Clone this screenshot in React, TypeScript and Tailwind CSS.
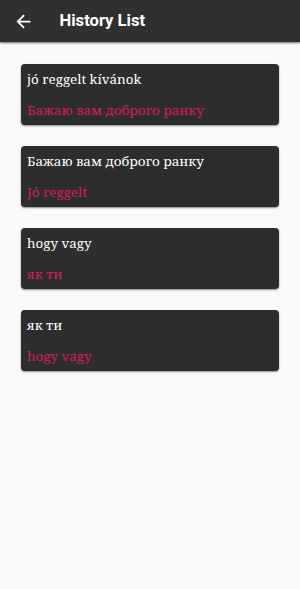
import React from 'react';

const items = [
    { source: 'jó reggelt kívánok', target: 'Бажаю вам доброго ранку' },
    { source: 'Бажаю вам доброго ранку', target: 'Jó reggelt' },
    { source: 'hogy vagy', target: 'як ти' },
    { source: 'як ти', target: 'hogy vagy' },
];

const HistoryCard: React.FC<{ source: string; target: string }> = ({ source, target }) => {
    return (
        <div className="h-[61px] rounded-[4px] bg-[#2d2d2d] px-[6px] pt-[4px] shadow-[0_1px_2px_rgba(0,0,0,0.45)] font-['Noto_Serif','DejaVu_Serif',serif]">
            <div className="text-[13.4px] leading-[22px] text-white">{source}</div>
            <div className="mt-[9px] text-[13.4px] leading-[22px] text-[#d81b60]">{target}</div>
        </div>
    );
}

const App: React.FC = () => {
    return (
        <main className="w-[300px] h-[589px] bg-[#fafafa] font-['Roboto',sans-serif]">
            <header className="h-[42px] bg-[#303030] flex items-center shadow-[0_1px_2px_rgba(0,0,0,0.6)]">
                <svg className="ml-[12.5px] w-[21px] h-[21px]" viewBox="0 0 24 24" fill="#ffffff">
                    <path d="M20 11H7.83l5.59-5.59L12 4l-8 8 8 8 1.41-1.41L7.83 13H20v-2z" />
                </svg>
                <h1 className="ml-[26px] text-[16.6px] font-bold text-white">History List</h1>
            </header>
            <div className="px-[21px] pt-[22px] flex flex-col gap-[21px]">
                {items.map((item, i) => (
                    <HistoryCard key={i} source={item.source} target={item.target} />
                ))}
            </div>
        </main>
    )
}

export default App;
